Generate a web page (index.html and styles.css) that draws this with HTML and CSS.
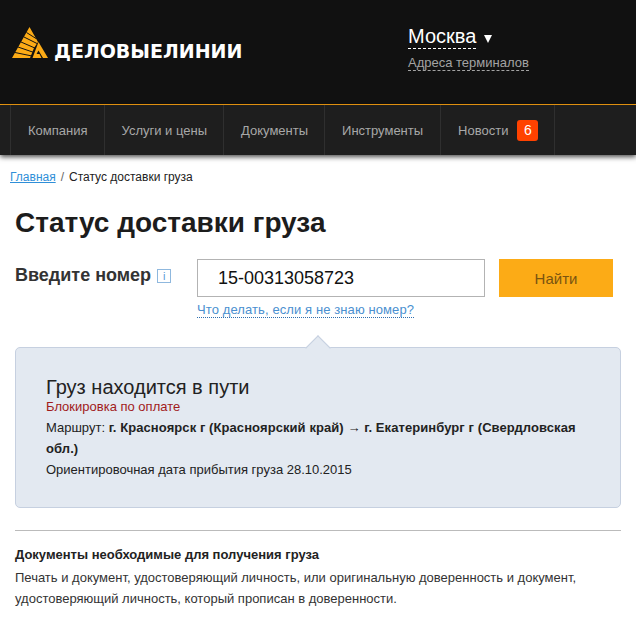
FILE: index.html
```html
<!DOCTYPE html>
<html lang="ru">
<head>
    <meta charset="UTF-8">
    <title>Статус доставки груза</title>
    <link rel="stylesheet" href="styles.css">
</head>
<body>
    <header class="top">
        <a class="logo" href="#">
            <svg class="logo-mark" width="37" height="32" viewBox="0 0 37 32">
                <path fill="#fcab16" d="M17.500 0 L0 31 L18 31 L22 21 L26 15 Z"/>
                <path fill="none" stroke="#111" stroke-width="1" d="M3 25.500 L20 29 M6 20 L22 25.500 M9 15 L24 21.500 M12 10 L25 16.500 M14.500 5.500 L24 11.500"/>
                <path fill="#fcab16" d="M26.500 15 L36 31 H31 L26.500 23.500 L24.500 27 H27.500 L29.500 31 H20.500 Z"/>
            </svg>
            <span class="logo-text">ДЕЛОВЫЕЛИНИИ</span>
        </a>
        <div class="city">
            <div class="city-row">
                <a class="city-name" href="#">Москва</a>
                <span class="city-arrow"></span>
            </div>
            <a class="city-link" href="#">Адреса терминалов</a>
        </div>
    </header>

    <nav class="menu">
        <a href="#">Компания</a>
        <a href="#">Услуги и цены</a>
        <a href="#">Документы</a>
        <a class="menu-tools" href="#">Инструменты</a>
        <a href="#">Новости <span class="badge">6</span></a>
    </nav>

    <main class="content">
        <p class="crumbs"><a href="#">Главная</a><span class="sep">/</span>Статус доставки груза</p>
        <h1>Статус доставки груза</h1>

        <form class="search">
            <div class="search-label">Введите номер <span class="info">i</span></div>
            <div class="search-field">
                <input class="search-input" type="text" value="15-00313058723">
                <a class="search-help" href="#">Что делать, если я не знаю номер?</a>
            </div>
            <button class="search-btn" type="button">Найти</button>
        </form>

        <!-- Status card -->
        <section class="status">
            <h2>Груз находится в пути</h2>
            <p class="status-warn">Блокировка по оплате</p>
            <p>Маршрут: <b>г. Красноярск г (Красноярский край) → г. Екатеринбург г (Свердловская обл.)</b></p>
            <p>Ориентировочная дата прибытия груза 28.10.2015</p>
        </section>

        <section class="docs">
            <h3>Документы необходимые для получения груза</h3>
            <p>Печать и документ, удостоверяющий личность, или оригинальную доверенность и документ, удостоверяющий личность, который прописан в доверенности.</p>
        </section>
    </main>
</body>
</html>
```

FILE: styles.css
```css
* {
    box-sizing: border-box;
}
body {
    margin: 0;
    font-family: "Liberation Sans", Arial, sans-serif;
    background-color: white;
    color: #222;
    overflow: hidden;
}
a {
    text-decoration: none;
}
.top {
    height: 105px;
    background-color: #111;
    border-bottom: 1px solid #fca311;
    display: flex;
    justify-content: space-between;
}
.logo {
    display: flex;
    align-items: flex-end;
    height: 60px;
    padding-left: 12px;
    color: white;
}
.logo-mark {
    margin-bottom: 1px;
}
.logo-text {
    margin-left: 5px;
    font-family: "DejaVu Sans", sans-serif;
    font-weight: bold;
    font-size: 19px;
    line-height: 18px;
}
.city {
    width: 228px;
    padding-top: 25px;
}
.city-row {
    display: flex;
    align-items: center;
}
.city-name {
    color: white;
    font-size: 20px;
    line-height: 23px;
    border-bottom: 1px dashed white;
}
.city-arrow {
    margin: 3px 0 0 8px;
    border-left: 4px solid transparent;
    border-right: 4px solid transparent;
    border-top: 8px solid white;
}
.city-link {
    display: inline-block;
    margin-top: 6px;
    color: #a3a3a3;
    font-size: 13px;
    line-height: 15px;
    border-bottom: 1px dashed #a3a3a3;
}
.menu {
    height: 50px;
    margin: 0;
    padding-left: 10px;
    background-color: #1e1e1e;
    display: flex;
    box-shadow: 0 2px 5px rgba(0, 0, 0, 0.7);
    position: relative;
}
.menu a {
    display: flex;
    align-items: center;
    padding: 0 16px 0 17px;
    border-left: 1px solid #2f2f2f;
    color: #a8a8a8;
    font-size: 13px;
}
.menu .menu-tools {
    padding-right: 17px;
}
.menu a:last-child {
    border-right: 1px solid #2f2f2f;
}
.badge {
    width: 21px;
    height: 21px;
    margin-left: 9px;
    border-radius: 3px;
    background-color: #ff4200;
    color: white;
    font-size: 14px;
    line-height: 21px;
    text-align: center;
}
.content {
    padding: 15px 15px 0;
}
.crumbs {
    margin: 0 0 0 -5px;
    font-size: 12px;
    line-height: 14px;
    color: #222;
}
.crumbs a {
    color: #2f8fd8;
    text-decoration: underline;
}
.sep {
    margin: 0 5px;
    color: #666;
}
h1 {
    margin: 24px 0 0;
    font-size: 28px;
    line-height: 30px;
    color: #1c1c1c;
}
.search {
    display: flex;
    margin-top: 21px;
}
.search-label {
    width: 182px;
    padding-top: 6px;
    font-size: 18px;
    font-weight: bold;
    color: #333;
}
.info {
    display: inline-block;
    width: 14px;
    height: 14px;
    margin-left: 1px;
    border: 1px solid #8fb8de;
    color: #5a9ad6;
    font-size: 11px;
    line-height: 12px;
    text-align: center;
    font-weight: normal;
    vertical-align: 1px;
}
.search-field {
    width: 288px;
}
.search-input {
    display: block;
    width: 288px;
    height: 38px;
    padding: 0 20px;
    border: 1px solid #b3b3b3;
    font-family: inherit;
    font-size: 18px;
    color: #111;
    outline: none;
}
.search-help {
    display: inline-block;
    margin-top: 6px;
    color: #4a8fd0;
    font-size: 13px;
    letter-spacing: 0.100px;
    line-height: 14px;
    border-bottom: 1px dotted #2f6fb0;
}
.search-btn {
    width: 114px;
    height: 38px;
    margin-left: 14px;
    background-color: #fcab16;
    border: none;
    color: #7a5410;
    font-family: inherit;
    font-size: 15px;
}
.status {
    position: relative;
    margin: 29px 0 0;
    width: 606px;
    height: 161px;
    padding: 29px 30px 0;
    background-color: #e3e9f1;
    border: 1px solid #c6d0e0;
    border-radius: 5px;
    font-size: 13px;
    line-height: 21px;
}
.status:before {
    content: "";
    position: absolute;
    top: -9px;
    left: 293px;
    width: 17px;
    height: 17px;
    background-color: #e3e9f1;
    border-left: 1px solid #c6d0e0;
    border-top: 1px solid #c6d0e0;
    transform: rotate(45deg);
}
.status h2 {
    margin: 0;
    font-size: 20px;
    line-height: 20px;
    font-weight: normal;
    color: #222;
}
.status p {
    margin: 0;
}
.status b {
    letter-spacing: 0.080px;
}
.status .status-warn {
    line-height: 20px;
    color: #a11b1b;
}
.docs {
    margin-top: 22px;
    width: 606px;
    padding-top: 16px;
    border-top: 1px solid #bbb;
    font-size: 13px;
    line-height: 21px;
}
.docs h3 {
    margin: 0;
    font-size: 13px;
    line-height: 16px;
}
.docs p {
    margin: 4px 0 0;
    color: #333;
}
```
